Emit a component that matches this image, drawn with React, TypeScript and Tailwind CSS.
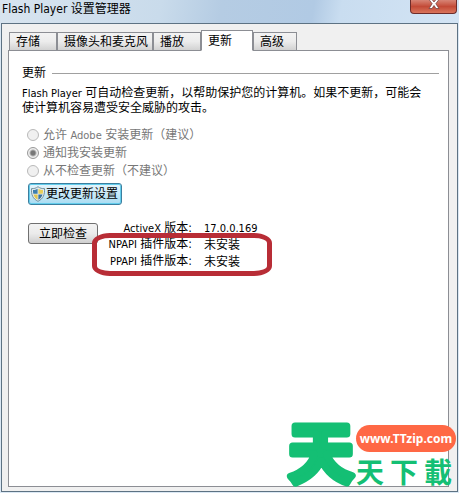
import { useState } from "react";
import type { ReactNode } from "react";

const tabs = [
  { id: "storage", label: "存储", width: "w-12" },
  { id: "camera", label: "摄像头和麦克风", width: "w-24" },
  { id: "playback", label: "播放", width: "w-12" },
  { id: "update", label: "更新", width: "w-13" },
  { id: "advanced", label: "高级", width: "w-11" },
];

const versions = [
  { name: "NPAPI", label: "插件版本:" },
  { name: "PPAPI", label: "插件版本:" },
];

function Latin({ children }: { children: ReactNode }) {
  return <span className="text-[11px]">{children}</span>;
}

function Shield() {
  return (
    <svg viewBox="0 0 16 16" className="size-4 shrink-0" aria-hidden="true">
      <path d="M8 .7C6 2.300 3.800 2.800 1.500 2.600c-.4 6 1.300 10.200 6.500 12.700 5.200-2.500 6.900-6.700 6.500-12.700C12.200 2.800 10 2.300 8 .7z" fill="#e4ecef" stroke="#72909c" />
      <path d="M7.600 2.800C6.200 3.700 4.700 4 3 4c-.1 1.400 0 2.700.3 3.800h4.300z" fill="#3f7fae" />
      <path d="M8.400 2.800C9.800 3.700 11.300 4 13 4c.1 1.400 0 2.700-.3 3.800H8.400z" fill="#e9cf5a" />
      <path d="M3.500 8.500c.6 2.300 1.900 4 4.100 5.300V8.500z" fill="#e3c64e" />
      <path d="M12.500 8.500c-.6 2.300-1.900 4-4.100 5.300V8.500z" fill="#3a739f" />
    </svg>
  );
}

function UpdateOption({ value, checked, children }: { value: string; checked?: boolean; children: ReactNode }) {
  return (
    <label className="flex h-[18px] items-center gap-1 text-[#777]">
      <input
        type="radio"
        name="update-mode"
        value={value}
        defaultChecked={checked}
        disabled
        className="size-3 shrink-0 appearance-none rounded-full border border-[#b9b9b9] bg-[#f0f0f0] checked:border-[#999] checked:bg-[radial-gradient(circle,#777_0_2px,#eee_4px)]"
      />
      <span>{children}</span>
    </label>
  );
}

function SiteLogo() {
  return (
    <div className="absolute right-[3px] bottom-[5px] flex items-end font-bold text-[#14bf74]">
      <svg viewBox="0 0 70 70" className="size-[70px] overflow-visible">
        <text
          x="35"
          y="59"
          textAnchor="middle"
          fontSize="65"
          fill="#14bf74"
          stroke="#14bf74"
          strokeWidth="7"
          strokeLinejoin="round"
        >
          天
        </text>
      </svg>
      <div className="flex flex-col items-start gap-2">
        <a
          href="#ttzip"
          className="flex h-[27px] w-[100px] items-center justify-center rounded-full bg-[#ff6845] font-['Noto_Sans',sans-serif] text-[12px] font-bold text-white"
        >
          www.TTzip.com
        </a>
        <div className="flex gap-[6px] text-[28px] leading-[28px]">
          <span>天</span>
          <span>下</span>
          <span>載</span>
        </div>
      </div>
    </div>
  );
}

export default function App() {
  const [active, setActive] = useState("update");

  return (
    <div className="relative flex min-h-screen flex-col bg-[#dbe8f4] px-px pb-px font-['DejaVu_Sans_Condensed','Noto_Sans_CJK_SC',sans-serif] text-[12px] leading-[14px] text-black">
      <header className="-mx-px flex h-[23px] items-start justify-between bg-linear-[100deg,#d8e4ef_0%,#c9dbeb_35%,#b5cce3_48%,#b1cae4_68%,#c9ddf0_74%,#d3e4f4_100%] pr-[2px] pl-[2px]">
        <h1 className="pt-[2px]">Flash Player 设置管理器</h1>
        <button
          aria-label="关闭"
          className="flex h-[14px] w-[47px] items-center justify-center rounded-b-[4px] border border-t-0 border-[#6d2c2a] bg-linear-to-b from-[#d78475] via-[#c34a37] to-[#d9745b]"
        >
          <svg viewBox="0 0 12 10" className="-mt-[6px] h-[10px] w-3" aria-hidden="true">
            <path d="M1 .5h3L6 3 8 .5h3L7.800 4.700 11 9.500H8L6 6.500 4 9.500H1l3.200-4.800z" fill="#fff" stroke="#6a3b3a" strokeWidth=".7" />
          </svg>
        </button>
      </header>

      <main className="flex flex-1 flex-col border border-[#5d7283] bg-[#f0f0f0] pt-[6px] pr-2 pb-1 pl-[6px]">
        <div role="tablist" className="relative z-10 -mb-px ml-px flex h-[21px] items-end">
          {tabs.map((tab) => (
            <button
              key={tab.id}
              role="tab"
              aria-selected={active === tab.id}
              onClick={() => setActive(tab.id)}
              className={`${tab.width} border border-[#8c8e94] pl-[6px] text-left whitespace-nowrap ${
                active === tab.id ? "h-[21px] border-b-white bg-white" : "h-[19px] bg-linear-to-b from-[#f3f3f3] via-[#ececec] to-[#d2d2d2]"
              }`}
            >
              {tab.label}
            </button>
          ))}
        </div>

        <section role="tabpanel" className="flex-1 border border-[#8c8e94] bg-white px-[9px] pt-[15px]">
          <div className="ml-1 flex items-center gap-[6px]">
            <h2>更新</h2>
            <div className="h-px flex-1 bg-[#a0a0a0]" />
          </div>
          <p className="mt-[6px] mr-4 ml-1">
            <Latin>Flash Player</Latin> 可自动检查更新，以帮助保护您的计算机。如果不更新，可能会使计算机容易遭受安全威胁的攻击。
          </p>

          <div role="radiogroup" aria-label="更新" className="mt-[11px] ml-[9px]">
            <UpdateOption value="allow">
              允许 <Latin>Adobe</Latin> 安装更新（建议）
            </UpdateOption>
            <UpdateOption value="notify" checked>
              通知我安装更新
            </UpdateOption>
            <UpdateOption value="never">从不检查更新（不建议）</UpdateOption>
          </div>

          <button className="mt-[3px] ml-[10px] flex h-[22px] w-[94px] items-center rounded-[3px] border border-[#3c7f9f] bg-linear-to-b from-[#e6f5fc] to-[#a9dcf2] px-px whitespace-nowrap shadow-[inset_0_0_0_1px_#63cdec]">
            <Shield />
            更改更新设置
          </button>

          <div className="mt-4 ml-[10px] flex items-start">
            <button className="mt-[2px] h-[21px] w-[70px] rounded-[3px] border border-[#707070] bg-linear-to-b from-[#f3f3f3] via-[#ebebeb] to-[#cfcfcf]">
              立即检查
            </button>
            <div>
              <dl className="grid grid-cols-[94px_auto] gap-x-3">
                <dt className="text-right">
                  <Latin>ActiveX</Latin> 版本:
                </dt>
                <dd>
                  <Latin>17.0.0.169</Latin>
                </dd>
              </dl>
              <div className="relative">
                {versions.map((item) => (
                  <dl key={item.name} className="grid h-[17px] grid-cols-[94px_auto] items-center gap-x-3">
                    <dt className="text-right">
                      <Latin>{item.name}</Latin> {item.label}
                    </dt>
                    <dd>未安装</dd>
                  </dl>
                ))}
                <div className="pointer-events-none absolute -top-[3px] -left-[6px] h-[43px] w-[180px] rounded-[18px/10px] border-[5px] border-[#b82d36]" />
              </div>
            </div>
          </div>
        </section>
      </main>

      <SiteLogo />
    </div>
  );
}
